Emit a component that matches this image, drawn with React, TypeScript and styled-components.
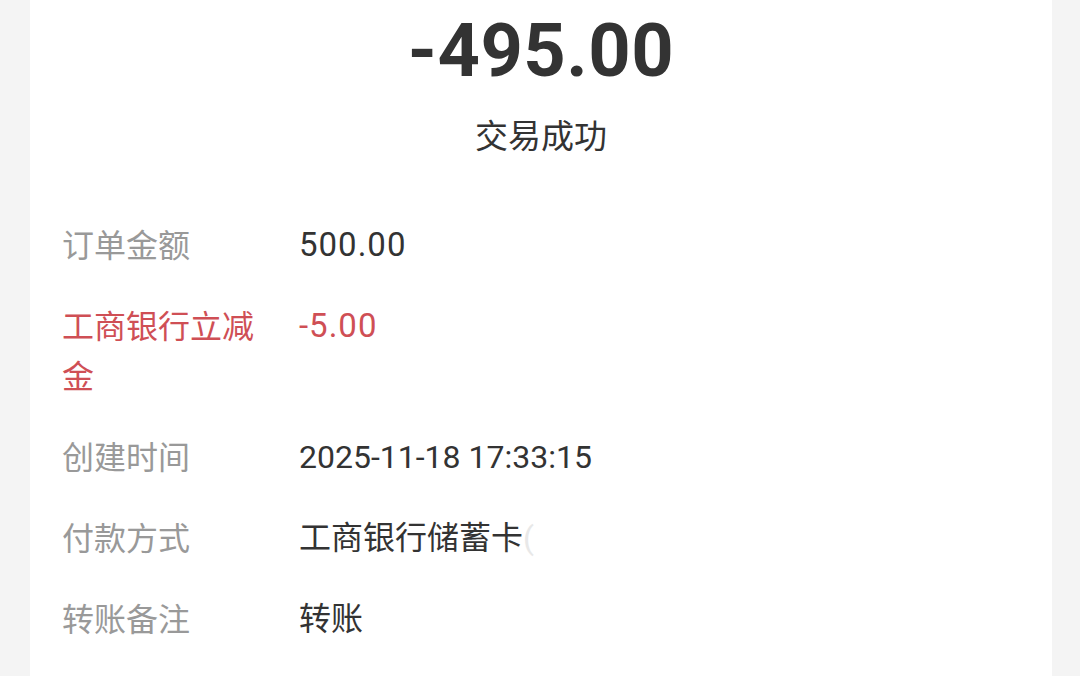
import React from "react";
import styled, { createGlobalStyle } from "styled-components";

const Global = createGlobalStyle`
  html, body { margin: 0; padding: 0; background: #f4f4f4; }
  body { font-family: Roboto, "Noto Sans CJK SC", sans-serif; }
  * { box-sizing: border-box; }
`;

const Page = styled.div`
  width: 1080px;
  height: 676px;
  overflow: hidden;
  background: #f4f4f4;
  padding: 0 28px 0 30px;
`;

const Card = styled.div`
  background: #fff;
  height: 100%;
  display: flex;
  flex-direction: column;
`;

const Header = styled.div`
  display: flex;
  flex-direction: column;
  align-items: center;
  padding-top: 6px;
`;

const Amount = styled.div`
  font-family: Roboto, sans-serif;
  font-weight: 700;
  font-size: 74px;
  line-height: 90px;
  color: #333;
  letter-spacing: 0.5px;
`;

const Status = styled.div`
  font-family: "Noto Sans CJK SC", sans-serif;
  font-size: 33px;
  line-height: 44px;
  color: #333;
  margin-top: 16px;
`;

const List = styled.div`
  display: flex;
  flex-direction: column;
  gap: 31px;
  padding: 0 32px;
  margin-top: 62px;
`;

const Row = styled.div`
  display: flex;
  align-items: flex-start;
`;

const Label = styled.div<{ $red?: boolean }>`
  width: 205px;
  margin-right: 32px;
  flex-shrink: 0;
  font-family: "Noto Sans CJK SC", sans-serif;
  font-size: 32px;
  line-height: 50px;
  height: auto;
  color: ${(p) => (p.$red ? "#cf4f55" : "#999")};
`;

const Value = styled.div<{ $red?: boolean }>`
  font-family: Roboto, "Noto Sans CJK SC", sans-serif;
  font-size: 32px;
  line-height: 50px;
  height: 50px;
  margin: 2px 0 -2px;
  color: ${(p) => (p.$red ? "#cf4f55" : "#333")};
`;

const Num = styled.span`
  font-size: 33px;
  letter-spacing: 1px;
`;

const Faded = styled.span`
  color: #e8e8e8;
`;

const rows: { label: string; value: React.ReactNode; red?: boolean }[] = [
  { label: "订单金额", value: <Num>500.00</Num> },
  { label: "工商银行立减金", value: <Num>-5.00</Num>, red: true },
  { label: "创建时间", value: "2025-11-18 17:33:15" },
  {
    label: "付款方式",
    value: (
      <>
        工商银行储蓄卡<Faded>(</Faded>
      </>
    ),
  },
  { label: "转账备注", value: "转账" },
];

export default function App() {
  return (
    <>
      <Global />
      <Page>
        <Card>
          <Header>
            <Amount>-495.00</Amount>
            <Status>交易成功</Status>
          </Header>
          <List>
            {rows.map((r, i) => (
              <Row key={i}>
                <Label $red={r.red}>{r.label}</Label>
                <Value $red={r.red}>{r.value}</Value>
              </Row>
            ))}
          </List>
        </Card>
      </Page>
    </>
  );
}
